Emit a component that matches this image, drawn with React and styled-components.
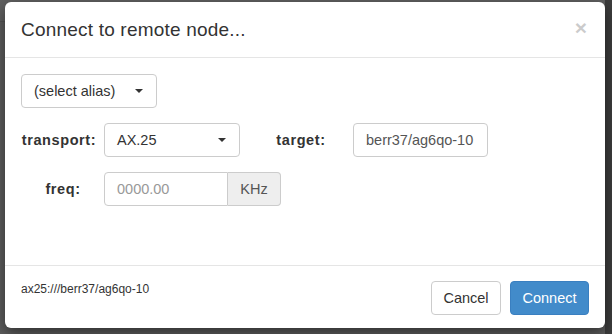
import styled, { createGlobalStyle } from "styled-components";

const GlobalStyle = createGlobalStyle`
  html, body {
    margin: 0;
    padding: 0;
    width: 612px;
    height: 334px;
    overflow: hidden;
    background: #5e5e5e;
    font-family: "Liberation Sans", Arial, sans-serif;
    color: #333;
  }
  * {
    box-sizing: border-box;
  }
`;

const Page = styled.div`
  position: relative;
  display: flex;
  width: 612px;
  height: 334px;
`;

const BackArea = styled.div`
  flex: 1;
  display: flex;
  flex-direction: column;
`;

const BackMenu = styled.div`
  height: 22px;
  border-bottom: 1px solid #545454;
  background: #616161;
`;

const BackStrip = styled.div`
  width: 7px;
  background: #3d3d3d;
`;

const Modal = styled.div`
  position: absolute;
  left: 5px;
  top: 2px;
  width: 600px;
  height: 326px;
  background: #fff;
  border-radius: 6px;
  box-shadow: 0 5px 15px rgba(0, 0, 0, 0.5);
  display: flex;
  flex-direction: column;
`;

const Header = styled.div`
  display: flex;
  align-items: center;
  justify-content: space-between;
  height: 56px;
  padding: 0 15px 0 16px;
  border-bottom: 1px solid #e5e5e5;
`;

const Title = styled.h4`
  margin: 0;
  font-size: 19px;
  font-weight: 400;
  color: #333;
  letter-spacing: 0.2px;
`;

const Close = styled.span`
  font-size: 21px;
  font-weight: 700;
  line-height: 1;
  color: #000;
  opacity: 0.2;
  margin-top: -4px;
  margin-right: 3px;
`;

const Body = styled.div`
  flex: 1;
  padding: 16px 16px;
  display: flex;
  flex-direction: column;
  gap: 15px;
`;

const Row = styled.div`
  display: flex;
  align-items: center;
  height: 34px;
`;

const Label = styled.label`
  width: ${(p) => p.$width}px;
  margin-left: ${(p) => p.$left || 0}px;
  text-align: center;
  font-size: 14.5px;
  font-weight: 700;
  letter-spacing: 0.6px;
  color: #333;
`;

const Select = styled.div`
  width: ${(p) => p.$width}px;
  height: 34px;
  border: 1px solid #ccc;
  border-radius: 4px;
  display: flex;
  align-items: center;
  justify-content: space-between;
  padding: 0 13px 0 12px;
  font-size: 14.5px;
  color: #333;
  background: #fff;
`;

const Caret = styled.span`
  width: 0;
  height: 0;
  border-left: 4px solid transparent;
  border-right: 4px solid transparent;
  border-top: 4px solid #333;
`;

const Input = styled.div`
  width: ${(p) => p.$width}px;
  height: 34px;
  border: 1px solid #ccc;
  border-radius: ${(p) => (p.$joined ? "4px 0 0 4px" : "4px")};
  display: flex;
  align-items: center;
  padding: 0 12px;
  font-size: 14.5px;
  color: ${(p) => (p.$placeholder ? "#999" : "#555")};
  background: #fff;
`;

const Addon = styled.div`
  width: 53px;
  height: 34px;
  border: 1px solid #ccc;
  border-left: none;
  border-radius: 0 4px 4px 0;
  background: #eee;
  color: #555;
  font-size: 14.5px;
  display: flex;
  align-items: center;
  justify-content: center;
`;

const Footer = styled.div`
  height: 63px;
  border-top: 1px solid #e5e5e5;
  padding: 15px 16px 15px 16px;
  display: flex;
  justify-content: space-between;
  align-items: flex-start;
`;

const Uri = styled.div`
  font-size: 12px;
  line-height: 17px;
  color: #333;
`;

const Buttons = styled.div`
  display: flex;
  gap: 9px;
`;

const Button = styled.button`
  height: 34px;
  padding: 0 10px;
  font-family: inherit;
  font-size: 14.5px;
  border-radius: 4px;
  border: 1px solid ${(p) => (p.$primary ? "#3a7fc0" : "#ccc")};
  background: ${(p) => (p.$primary ? "#428bca" : "#fff")};
  color: ${(p) => (p.$primary ? "#fff" : "#333")};
  width: ${(p) => p.$width}px;
`;

export default function App() {
  return (
    <>
      <GlobalStyle />
      <Page>
        <BackArea>
          <BackMenu />
        </BackArea>
        <BackStrip />
        <Modal>
          <Header>
            <Title>Connect to remote node...</Title>
            <Close>×</Close>
          </Header>
          <Body>
            <Row>
              <Select $width={136}>
                (select alias) <Caret />
              </Select>
            </Row>
            <Row>
              <Label $width={76}>transport:</Label>
              <Select $width={136} style={{ marginLeft: 7 }}>
                AX.25 <Caret />
              </Select>
              <Label $width={58} $left={32}>target:</Label>
              <Input $width={135} style={{ marginLeft: 23 }}>
                berr37/ag6qo-10
              </Input>
            </Row>
            <Row>
              <Label $width={76} $left={4}>freq:</Label>
              <Input $width={124} $joined $placeholder style={{ marginLeft: 3 }}>
                0000.00
              </Input>
              <Addon>KHz</Addon>
            </Row>
          </Body>
          <Footer>
            <Uri>ax25:///berr37/ag6qo-10</Uri>
            <Buttons>
              <Button $width={70}>Cancel</Button>
              <Button $primary $width={79}>Connect</Button>
            </Buttons>
          </Footer>
        </Modal>
      </Page>
    </>
  );
}
